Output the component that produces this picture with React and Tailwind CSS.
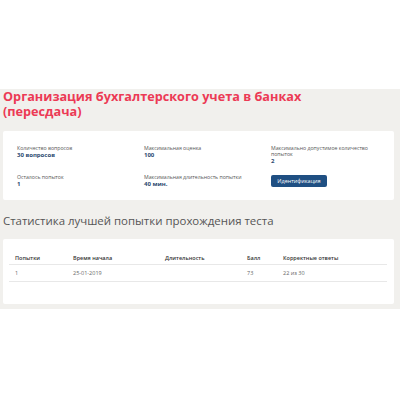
export default function App() {
  const cols = "grid grid-cols-[58px_92px_82px_36px_1fr] pl-[6px]";
  const label = "text-[5.2px] leading-[5.8px] text-[#555]";
  const value = "text-[6px] leading-[7px] font-bold text-[#2b4a6f] mt-[0.5px]";
  return (
    <div className="w-[400px] h-[400px] bg-white overflow-hidden" style={{ fontFamily: '"Open Sans", sans-serif' }}>
      <div className="h-[90px]" />
      <div className="bg-[#f1f0ed] px-[3px] pr-[6px] pb-[5px]">
        <h1 className="-mt-[1px] text-[12.7px] leading-[14.5px] font-bold text-[#ec3a55]">
          Организация бухгалтерского учета в банках<br />(пересдача)
        </h1>
        <div className="mt-[13px] bg-white rounded-[2px] pl-[14px] pt-[15px] pb-[12.5px]">
          <div className="grid grid-cols-[127px_127px_100px] gap-y-[9.5px]">
            <div>
              <div className={label}>Количество вопросов</div>
              <div className={value}>30 вопросов</div>
            </div>
            <div>
              <div className={label}>Максимальная оценка</div>
              <div className={value}>100</div>
            </div>
            <div>
              <div className={label}>Максимально допустимое количество<br />попыток</div>
              <div className={value}>2</div>
            </div>
            <div>
              <div className={label}>Осталось попыток</div>
              <div className={value}>1</div>
            </div>
            <div>
              <div className={label}>Максимальная длительность попытки</div>
              <div className={value}>40 мин.</div>
            </div>
            <div>
              <div className="w-[56px] h-[12.5px] rounded-[2px] bg-[#1f4f82] text-white text-[5.5px] font-medium flex items-center justify-center">
                Идентификация
              </div>
            </div>
          </div>
        </div>
        <h2 className="mt-[14px] text-[11.45px] leading-[14px] text-[#555]">
          Статистика лучшей попытки прохождения теста
        </h2>
        <div className="mt-[11px] bg-white rounded-[2px] pl-[6px] pr-[7px] pt-[12px] pb-[22px]">
          <div className={cols + " h-[14px] items-center text-[5.5px] font-semibold text-[#333] border-b border-[#e8e8e8]"}>
            <div>Попытки</div>
            <div>Время начала</div>
            <div>Длительность</div>
            <div>Балл</div>
            <div>Корректные ответы</div>
          </div>
          <div className={cols + " h-[17px] items-center text-[5.5px] text-[#666] border-b border-[#e8e8e8]"}>
            <div>1</div>
            <div>25-01-2019</div>
            <div></div>
            <div>73</div>
            <div>22 из 30</div>
          </div>
        </div>
      </div>
    </div>
  );
}
